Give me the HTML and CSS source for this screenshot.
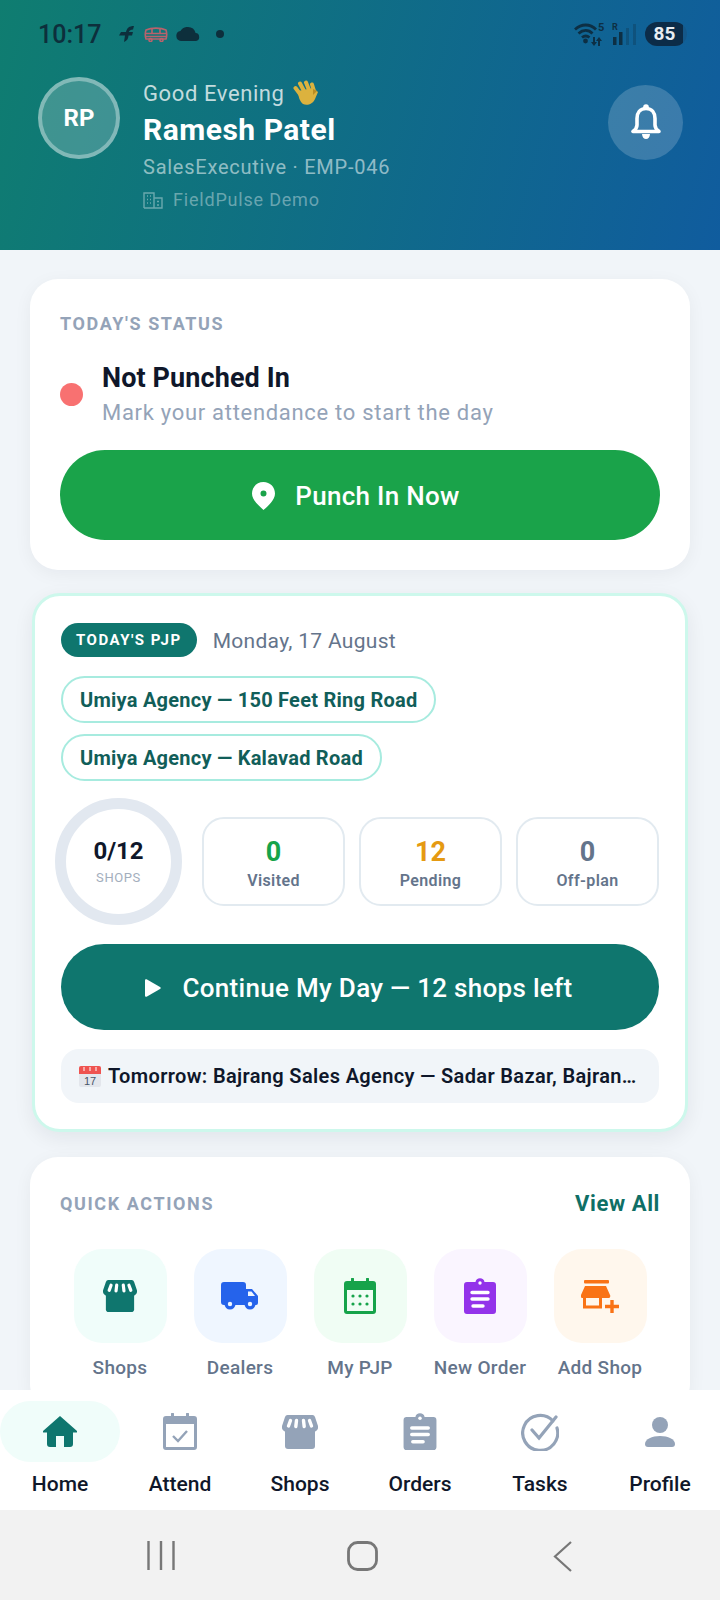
FILE: index.html
```html
<!DOCTYPE html>
<html lang="en">
<head>
    <meta charset="UTF-8">
    <meta name="viewport" content="width=device-width, initial-scale=1.0">
    <title>FieldPulse Home</title>
    <link rel="stylesheet" href="styles.css">
</head>
<body>
    <!-- Shared icons -->
    <svg class="sprite" aria-hidden="true">
        <symbol id="icon-shop" viewBox="0 0 36 34">
            <path fill="currentColor" d="M3 12h30v19a3 3 0 0 1-3 3H6a3 3 0 0 1-3-3z"/>
            <path fill="currentColor" d="M6 0h24a3 3 0 0 1 3 2l3 9a5 5 0 0 1-5 6H5a5 5 0 0 1-5-6l3-9a3 3 0 0 1 3-2z"/>
            <path fill="none" stroke="#fff" stroke-width="3.400" stroke-linecap="round" d="M8.500 5.500L6.500 11M14.500 5.500L13.800 11.500M21.500 5.500l.7 6M27.500 5.500l2 5.500"/>
        </symbol>
        <symbol id="icon-clip" viewBox="0 0 32 36">
            <path fill="currentColor" d="M3 4h8.500a4.600 4.600 0 0 1 9 0H29a3 3 0 0 1 3 3v26a3 3 0 0 1-3 3H3a3 3 0 0 1-3-3V7a3 3 0 0 1 3-3z"/>
            <circle cx="16" cy="5" r="1.700" fill="#fff"/>
            <path fill="none" stroke="#fff" stroke-width="3.400" stroke-linecap="round" d="M8 14.500h16M8 21h16M9 28h10"/>
        </symbol>
    </svg>

    <div class="screen">
        <header class="hero">
            <div class="statusbar">
                <div class="status-left">
                    <span class="clock">10:17</span>
                    <svg class="st-f" width="15" height="16" viewBox="0 0 15 16"><path fill="#0d2f3c" d="M15 0C10 0 8 2 7 6H2L0 9.500h6l-1 6.500c2.500-1 4.500-3 4.500-6.500H13L14 6H9.800C10.200 4.500 12 3.500 14 3.500z"/></svg>
                    <svg class="st-bus" width="24" height="15" viewBox="0 0 24 15"><g fill="none" stroke="#b9626c" stroke-width="1.600"><path d="M2 3c5-2.500 15-2.500 20 0 1 3 1 6 0 9H2C1 9 1 6 2 3z"/><path d="M1.500 6.500h21M8 2v4.500M16 2v4.500M2 9.500h20"/><circle cx="6.500" cy="13" r="1.500"/><circle cx="17.500" cy="13" r="1.500"/></g></svg>
                    <svg class="st-cloud" width="24" height="14" viewBox="0 0 24 14"><path fill="#0d2f3c" d="M5 14a5 5 0 0 1-.6-9.900A8 8 0 0 1 12 0a8 8 0 0 1 7.600 6.100A4 4 0 0 1 20 14z"/></svg>
                    <span class="st-dot"></span>
                </div>
                <div class="status-right">
                    <svg width="32" height="24" viewBox="0 0 32 24"><g fill="none" stroke="#0d2f44" stroke-width="2.800"><path d="M1 7.500c6.500-6 15-6 21 0M4.500 11.500c4.500-4 10-4 14 0M8 15.500c2.500-2 5-2 7.500 0"/></g><circle cx="11.500" cy="19" r="2.400" fill="#0d2f44"/><path fill="#0d2f44" d="M19 15h2v5h2l-3 4-3-4h2zM26 24h-2v-5h-2l3-4 3 4h-2z"/><text x="24" y="9" class="st-net">5</text></svg>
                    <svg width="24" height="24" viewBox="0 0 24 24"><text x="0" y="8" class="st-net st-r">R</text><g fill="#0d2f44"><rect x="1" y="15" width="3.500" height="8"/><rect x="7" y="10" width="3.500" height="13"/></g><g fill="#0d2f44" opacity=".3"><rect x="14" y="6" width="3" height="17"/><rect x="21" y="2" width="3" height="21"/></g></svg>
                    <span class="battery">85</span>
                </div>
            </div>
            <div class="hero-row">
                <div class="avatar">RP</div>
                <div class="hero-text">
                    <div class="greeting">Good Evening
                        <svg class="wave" width="27" height="26" viewBox="0 0 27 26"><g fill="none" stroke="#dcb23e" stroke-width="4" stroke-linecap="round"><path d="M7 14L2.500 8M11 11L7 3.500M16 10L13 2.500M21 11L19 4.500"/></g><path fill="#dcb23e" d="M5 11l15-3 5 4-3 7c-2 5-8 7-12 5-3-2-5-8-5-13z"/><path fill="#b98c24" d="M20 9l4 2-4 4z"/></svg>
                    </div>
                    <div class="name">Ramesh Patel</div>
                    <div class="role">SalesExecutive · EMP-046</div>
                    <div class="org">
                        <svg width="20" height="17" viewBox="0 0 20 17"><g fill="none" stroke="currentColor" stroke-width="1.400"><path d="M1 16V1h10v15M11 6h8v10H1"/><path d="M4 4h1M7 4h1M4 7.500h1M7 7.500h1M4 11h1M7 11h1M14 9.500h2M14 13h2"/></g></svg>
                        FieldPulse Demo
                    </div>
                </div>
                <div class="bell">
                    <svg width="30" height="37" viewBox="0 0 30 37"><path fill="none" stroke="#fff" stroke-width="3.600" stroke-linejoin="round" d="M15 4.500c-6 0-9 4.500-9 10v6.500c0 3-2 5-4 6.500h26c-2-1.500-4-3.500-4-6.500v-6.500c0-5.500-3-10-9-10z"/><circle cx="15" cy="3" r="2.800" fill="#fff"/><path fill="#fff" d="M11 30h8c0 3-2 5-4 5s-4-2-4-5z"/></svg>
                </div>
            </div>
        </header>

        <main class="content">
            <section class="card">
                <div class="label label-top">TODAY'S STATUS</div>
                <div class="status-row">
                    <span class="red-dot"></span>
                    <div>
                        <div class="status-title">Not Punched In</div>
                        <div class="status-sub">Mark your attendance to start the day</div>
                    </div>
                </div>
                <button class="btn btn-green">
                    <svg width="23" height="28" viewBox="0 0 23 28"><path fill="#fff" fill-rule="evenodd" d="M11.500 0C5 0 0 5 0 11.500 0 18 7 24 11.500 28 16 24 23 18 23 11.500 23 5 18 0 11.500 0zm0 8.500a3 3 0 1 1 0 6 3 3 0 0 1 0-6z"/></svg>
                    Punch In Now
                </button>
            </section>

            <section class="card card-pjp">
                <div class="pjp-head">
                    <span class="badge">TODAY'S PJP</span>
                    <span class="pjp-date">Monday, 17 August</span>
                </div>
                <div class="chips">
                    <span class="chip">Umiya Agency — 150 Feet Ring Road</span>
                    <span class="chip">Umiya Agency — Kalavad Road</span>
                </div>
                <div class="progress">
                    <div class="ring">
                        <div class="ring-val">0/12</div>
                        <div class="ring-sub">SHOPS</div>
                    </div>
                    <div class="stat"><div class="stat-val val-green">0</div><div class="stat-label">Visited</div></div>
                    <div class="stat"><div class="stat-val val-amber">12</div><div class="stat-label">Pending</div></div>
                    <div class="stat"><div class="stat-val val-slate">0</div><div class="stat-label">Off-plan</div></div>
                </div>
                <button class="btn btn-teal">
                    <svg width="16" height="18" viewBox="0 0 16 18"><path fill="#fff" d="M0 1.500C0 .4 1 0 2 .5l13 7.500c1 .6 1 1.400 0 2L2 17.500c-1 .5-2 .1-2-1z"/></svg>
                    Continue My Day — 12 shops left
                </button>
                <div class="tomorrow">
                    <svg width="22" height="21" viewBox="0 0 22 21"><rect width="22" height="21" rx="2" fill="#e3e6ec"/><path fill="#ef5350" d="M0 2a2 2 0 0 1 2-2h18a2 2 0 0 1 2 2v6H0z"/><path stroke="#fff" stroke-width="1" d="M5 1v4M11 1v4M17 1v4"/><text x="11" y="18.500" class="cal-num">17</text></svg>
                    <span class="tomorrow-text">Tomorrow: Bajrang Sales Agency — Sadar Bazar, Bajran…</span>
                </div>
            </section>

            <section class="card">
                <div class="qa-head">
                    <span class="label">QUICK ACTIONS</span>
                    <span class="view-all">View All</span>
                </div>
                <div class="qa-grid">
                    <div class="qa-item">
                        <div class="tile tile-teal"><svg width="34" height="32"><use href="#icon-shop"/></svg></div>
                        <span>Shops</span>
                    </div>
                    <div class="qa-item">
                        <div class="tile tile-blue">
                            <svg width="38" height="28" viewBox="0 0 38 28"><path fill="currentColor" d="M3 0h19a3 3 0 0 1 3 3v4h6l6 7v7a2 2 0 0 1-2 2H3a3 3 0 0 1-3-3V3a3 3 0 0 1 3-3z"/><path fill="#eff6ff" d="M27 9.500h3.500l3.500 4.500h-7z"/><circle cx="9" cy="22" r="5.500" fill="currentColor"/><circle cx="9" cy="22" r="2.200" fill="#eff6ff"/><circle cx="29" cy="22" r="5.500" fill="currentColor"/><circle cx="29" cy="22" r="2.200" fill="#eff6ff"/></svg>
                        </div>
                        <span>Dealers</span>
                    </div>
                    <div class="qa-item">
                        <div class="tile tile-green">
                            <svg width="32" height="36" viewBox="0 0 32 36"><path fill="currentColor" d="M3 3h4V1a1.500 1.500 0 0 1 3 0v2h12V1a1.500 1.500 0 0 1 3 0v2h4a3 3 0 0 1 3 3v27a3 3 0 0 1-3 3H3a3 3 0 0 1-3-3V6a3 3 0 0 1 3-3z"/><rect x="3" y="12" width="26" height="21" fill="#f0fdf4"/><g fill="currentColor"><circle cx="9" cy="18" r="1.600"/><circle cx="16" cy="18" r="1.600"/><circle cx="23" cy="18" r="1.600"/><circle cx="9" cy="26" r="1.600"/><circle cx="16" cy="26" r="1.600"/><circle cx="23" cy="26" r="1.600"/></g></svg>
                        </div>
                        <span>My PJP</span>
                    </div>
                    <div class="qa-item">
                        <div class="tile tile-purple"><svg width="32" height="36"><use href="#icon-clip"/></svg></div>
                        <span>New Order</span>
                    </div>
                    <div class="qa-item">
                        <div class="tile tile-orange">
                            <svg width="38" height="33" viewBox="0 0 38 33"><g fill="currentColor"><rect x="3" y="0" width="25" height="3.500" rx="1"/><path d="M4 6h21l4 9a2 2 0 0 1-2 3H2a2 2 0 0 1-2-3z"/></g><path fill="none" stroke="currentColor" stroke-width="3" d="M3.500 17v10h16V17"/><path fill="none" stroke="currentColor" stroke-width="3.400" d="M31 20v13M24 26.500h14"/></svg>
                        </div>
                        <span>Add Shop</span>
                    </div>
                </div>
            </section>
        </main>

        <nav class="tabbar">
            <div class="tab tab-on">
                <div class="tab-pill">
                    <svg width="34" height="31" viewBox="0 0 34 31"><path fill="currentColor" d="M17 0l17 15a.8.8 0 0 1-.5 1.400H30V28a3 3 0 0 1-3 3h-6V20h-8v11H7a3 3 0 0 1-3-3V16.400H.5A.8.8 0 0 1 0 15z"/></svg>
                </div>
                <span>Home</span>
            </div>
            <div class="tab">
                <div class="tab-pill">
                    <svg width="34" height="37" viewBox="0 0 34 37"><path fill="currentColor" d="M3 3h5V1a1.500 1.500 0 0 1 3 0v2h12V1a1.500 1.500 0 0 1 3 0v2h5a3 3 0 0 1 3 3v28a3 3 0 0 1-3 3H3a3 3 0 0 1-3-3V6a3 3 0 0 1 3-3z"/><rect x="3" y="11" width="28" height="23" fill="#fff"/><path fill="none" stroke="currentColor" stroke-width="2.400" d="M10 23l5 5 9-10"/></svg>
                </div>
                <span>Attend</span>
            </div>
            <div class="tab">
                <div class="tab-pill"><svg width="36" height="34"><use href="#icon-shop"/></svg></div>
                <span>Shops</span>
            </div>
            <div class="tab">
                <div class="tab-pill"><svg width="34" height="37"><use href="#icon-clip"/></svg></div>
                <span>Orders</span>
            </div>
            <div class="tab">
                <div class="tab-pill">
                    <svg width="38" height="38" viewBox="0 0 38 38"><path fill="none" stroke="currentColor" stroke-width="3.200" stroke-linecap="round" d="M32 8A17.500 17.500 0 1 0 36 15M11 17l7 8L35 4"/></svg>
                </div>
                <span>Tasks</span>
            </div>
            <div class="tab">
                <div class="tab-pill">
                    <svg width="30" height="30" viewBox="0 0 30 30"><ellipse cx="15" cy="8" rx="8" ry="8" fill="currentColor"/><path fill="currentColor" d="M0 27c0-5 7-8 15-8s15 3 15 8a3 3 0 0 1-3 3H3a3 3 0 0 1-3-3z"/></svg>
                </div>
                <span>Profile</span>
            </div>
        </nav>

        <div class="sysnav">
            <svg width="28" height="29" viewBox="0 0 28 29"><path fill="none" stroke="#777" stroke-width="2.400" d="M1.500 0v29M14 0v29M26.500 0v29"/></svg>
            <svg class="sys-home" width="31" height="30" viewBox="0 0 31 30"><rect x="1.500" y="1.500" width="28" height="27" rx="9" fill="none" stroke="#777" stroke-width="2.800"/></svg>
            <svg width="20" height="31" viewBox="0 0 20 31"><path fill="none" stroke="#777" stroke-width="2.200" d="M18 1L2 15.500 18 30"/></svg>
        </div>
    </div>
</body>
</html>
```

FILE: styles.css
```css
/* Basic Reset */
* {
    box-sizing: border-box;
}

body {
    margin: 0;
    font-family: Roboto, "Noto Sans", sans-serif;
    background-color: #f1f5f9;
}

.sprite {
    display: none;
}

.screen {
    width: 720px;
    height: 1600px;
    display: flex;
    flex-direction: column;
    overflow: hidden;
}

/* Header */
.hero {
    height: 250px;
    flex: none;
    padding: 0 38px;
    background: linear-gradient(105deg, #0f7d70 0%, #105c9e 100%);
}

.statusbar {
    height: 68px;
    display: flex;
    justify-content: space-between;
    align-items: center;
}

.status-left,
.status-right {
    display: flex;
    align-items: center;
}

.clock {
    font-size: 25px;
    font-weight: 500;
    color: #0d2f3c;
    margin-right: 18px;
}

.st-bus {
    margin-left: 10px;
}

.st-cloud {
    margin-left: 8px;
}

.st-dot {
    width: 8px;
    height: 8px;
    margin-left: 16px;
    border-radius: 50%;
    background-color: #0d2f3c;
}

.status-right {
    gap: 6px;
    margin-right: -5px;
}

.st-net {
    font-size: 11px;
    font-weight: 700;
    fill: #0d2f44;
}

.st-r {
    font-size: 9px;
}

.battery {
    width: 42px;
    height: 24px;
    margin-left: 3px;
    padding-right: 3px;
    border-radius: 12px;
    background: linear-gradient(90deg, #0c2c48 90%, #14588a 90%);
    color: #e8eef3;
    font-size: 19px;
    font-weight: 700;
    line-height: 24px;
    text-align: center;
}

.hero-row {
    display: flex;
    align-items: flex-start;
    margin-top: 9px;
}

.avatar {
    width: 82px;
    height: 82px;
    flex: none;
    border: 4px solid rgba(255, 255, 255, 0.35);
    border-radius: 50%;
    background-color: rgba(255, 255, 255, 0.2);
    color: #fff;
    font-size: 24px;
    font-weight: 700;
    line-height: 75px;
    text-align: center;
}

.hero-text {
    flex: 1;
    margin-left: 23px;
    margin-top: 2px;
}

.greeting {
    display: flex;
    align-items: center;
    gap: 8px;
    height: 28px;
    font-size: 22px;
    letter-spacing: 0.6px;
    color: rgba(255, 255, 255, 0.75);
}

.name {
    margin-top: 6px;
    font-size: 30px;
    line-height: 34px;
    font-weight: 700;
    letter-spacing: 0.5px;
    color: #fff;
}

.role {
    margin-top: 6px;
    font-size: 20px;
    line-height: 28px;
    letter-spacing: 0.75px;
    color: rgba(255, 255, 255, 0.55);
}

.org {
    display: flex;
    align-items: center;
    gap: 10px;
    margin-top: 7px;
    font-size: 18px;
    line-height: 24px;
    letter-spacing: 0.8px;
    color: rgba(255, 255, 255, 0.38);
}

.bell {
    width: 75px;
    height: 75px;
    flex: none;
    display: flex;
    align-items: center;
    justify-content: center;
    margin: 8px -1px 0 0;
    border-radius: 50%;
    background-color: rgba(255, 255, 255, 0.18);
}

/* Scrolling content */
.content {
    flex: 1;
    min-height: 0;
    overflow: hidden;
    padding: 29px 30px 0;
}

.card {
    margin-bottom: 23px;
    padding: 30px;
    border-radius: 28px;
    background-color: #fff;
    box-shadow: 0 4px 18px rgba(15, 23, 42, 0.05);
}

.label {
    font-size: 18px;
    line-height: 28px;
    font-weight: 700;
    letter-spacing: 1.6px;
    color: #94a3b8;
}

.label-top {
    margin-top: 1px;
}

.status-row {
    display: flex;
    align-items: center;
    gap: 19px;
    margin-top: 24px;
}

.red-dot {
    width: 23px;
    height: 23px;
    flex: none;
    border-radius: 50%;
    background-color: #f87171;
}

.status-title {
    font-size: 27px;
    line-height: 32px;
    font-weight: 700;
    letter-spacing: 0.1px;
    color: #0f172a;
}

.status-sub {
    margin-top: 5px;
    font-size: 22px;
    line-height: 28px;
    letter-spacing: 0.7px;
    color: #94a3b8;
}

/* Buttons */
.btn {
    width: 100%;
    display: flex;
    align-items: center;
    justify-content: center;
    border: none;
    padding-top: 2px;
    color: #fff;
    font-family: inherit;
    font-size: 26px;
    font-weight: 500;
    letter-spacing: 0.3px;
}

.btn-green {
    height: 90px;
    gap: 20px;
    margin-top: 23px;
    padding-right: 14px;
    border-radius: 45px;
    background-color: #1aa34a;
}

.btn-teal {
    height: 86px;
    gap: 22px;
    margin-top: 19px;
    padding-right: 9px;
    border-radius: 43px;
    background-color: #0f766e;
}

/* PJP card */
.card-pjp {
    margin: 0 2px 25px;
    padding: 27px 26px 26px 26px;
    border: 3px solid #cdf8ec;
    box-shadow: 0 6px 20px rgba(15, 23, 42, 0.07);
}

.pjp-head {
    display: flex;
    align-items: center;
    gap: 16px;
}

.badge {
    height: 34px;
    padding: 0 15px;
    border-radius: 17px;
    background-color: #0f766e;
    color: #fff;
    font-size: 15px;
    font-weight: 700;
    line-height: 34px;
    letter-spacing: 1.5px;
}

.pjp-date {
    padding-top: 2px;
    font-size: 21px;
    letter-spacing: 0.3px;
    color: #64748b;
}

.chips {
    display: flex;
    flex-direction: column;
    align-items: flex-start;
    gap: 11px;
    margin-top: 19px;
}

.chip {
    height: 47px;
    padding: 0 17px;
    border: 2px solid #a7ebdf;
    border-radius: 24px;
    color: #115e59;
    font-size: 20px;
    font-weight: 700;
    line-height: 44px;
    letter-spacing: 0.25px;
}

.progress {
    display: flex;
    align-items: center;
    gap: 14px;
    margin-top: 17px;
}

.ring {
    width: 127px;
    height: 127px;
    flex: none;
    margin: 0 6px 0 -6px;
    border: 11px solid #e2e8f0;
    border-radius: 50%;
    text-align: center;
}

.ring-val {
    margin-top: 27px;
    font-size: 24px;
    line-height: 30px;
    font-weight: 700;
    color: #0f172a;
}

.ring-sub {
    margin-top: 4px;
    font-size: 13px;
    line-height: 16px;
    letter-spacing: 0.6px;
    color: #a3aebd;
}

.stat {
    width: 143px;
    height: 89px;
    padding-top: 18px;
    border: 2px solid #e2eaf0;
    border-radius: 22px;
    text-align: center;
}

.stat-val {
    font-size: 27px;
    line-height: 30px;
    font-weight: 700;
}

.val-green { color: #16a34a; }
.val-amber { color: #e59a12; }
.val-slate { color: #64748b; }

.stat-label {
    margin-top: 4px;
    font-size: 16px;
    line-height: 20px;
    font-weight: 600;
    letter-spacing: 0.4px;
    color: #64748b;
}

.tomorrow {
    height: 54px;
    display: flex;
    align-items: center;
    gap: 7px;
    margin-top: 19px;
    padding: 0 18px;
    border-radius: 18px;
    background-color: #f1f5f9;
}

.tomorrow svg {
    flex: none;
}

.cal-num {
    font-size: 11px;
    font-family: "Liberation Sans", sans-serif;
    text-anchor: middle;
    fill: #475569;
}

.tomorrow-text {
    white-space: nowrap;
    font-size: 20px;
    font-weight: 600;
    letter-spacing: 0.35px;
    color: #0f172a;
}

/* Quick actions */
.qa-head {
    display: flex;
    justify-content: space-between;
    align-items: center;
    height: 34px;
}

.view-all {
    padding-bottom: 2px;
    font-size: 22px;
    font-weight: 700;
    letter-spacing: 0.6px;
    color: #0f6f66;
}

.qa-grid {
    display: grid;
    grid-template-columns: repeat(5, 1fr);
    margin-top: 28px;
}

.qa-item {
    display: flex;
    flex-direction: column;
    align-items: center;
    gap: 11px;
    font-size: 19px;
    line-height: 28px;
    font-weight: 500;
    letter-spacing: 0.3px;
    white-space: nowrap;
    color: #64748b;
}

.tile {
    width: 93px;
    height: 94px;
    display: flex;
    align-items: center;
    justify-content: center;
    border-radius: 28px;
}

.tile-teal { background-color: #f0fdfa; color: #0f766e; }
.tile-blue { background-color: #eff6ff; color: #2563eb; }
.tile-green { background-color: #f0fdf4; color: #16a34a; }
.tile-purple { background-color: #faf5ff; color: #9333ea; }
.tile-orange { background-color: #fff7ed; color: #f97316; }

/* Bottom tabs */
.tabbar {
    height: 120px;
    flex: none;
    display: grid;
    grid-template-columns: repeat(6, 1fr);
    padding-top: 11px;
    background-color: #fff;
}

.tab {
    display: flex;
    flex-direction: column;
    align-items: center;
    gap: 9px;
    font-size: 21px;
    line-height: 26px;
    font-weight: 500;
    color: #0f172a;
}

.tab-pill {
    width: 120px;
    height: 61px;
    display: flex;
    align-items: center;
    justify-content: center;
    border-radius: 31px;
    color: #94a3b8;
}

.tab-on .tab-pill {
    background-color: #f0fdfa;
    color: #0f766e;
}

/* Android nav bar */
.sysnav {
    height: 90px;
    flex: none;
    display: flex;
    align-items: flex-start;
    justify-content: space-between;
    padding: 31px 147px 0 147px;
    background-color: #f2f2f2;
}

.sys-home {
    margin-right: 4px;
}
```
